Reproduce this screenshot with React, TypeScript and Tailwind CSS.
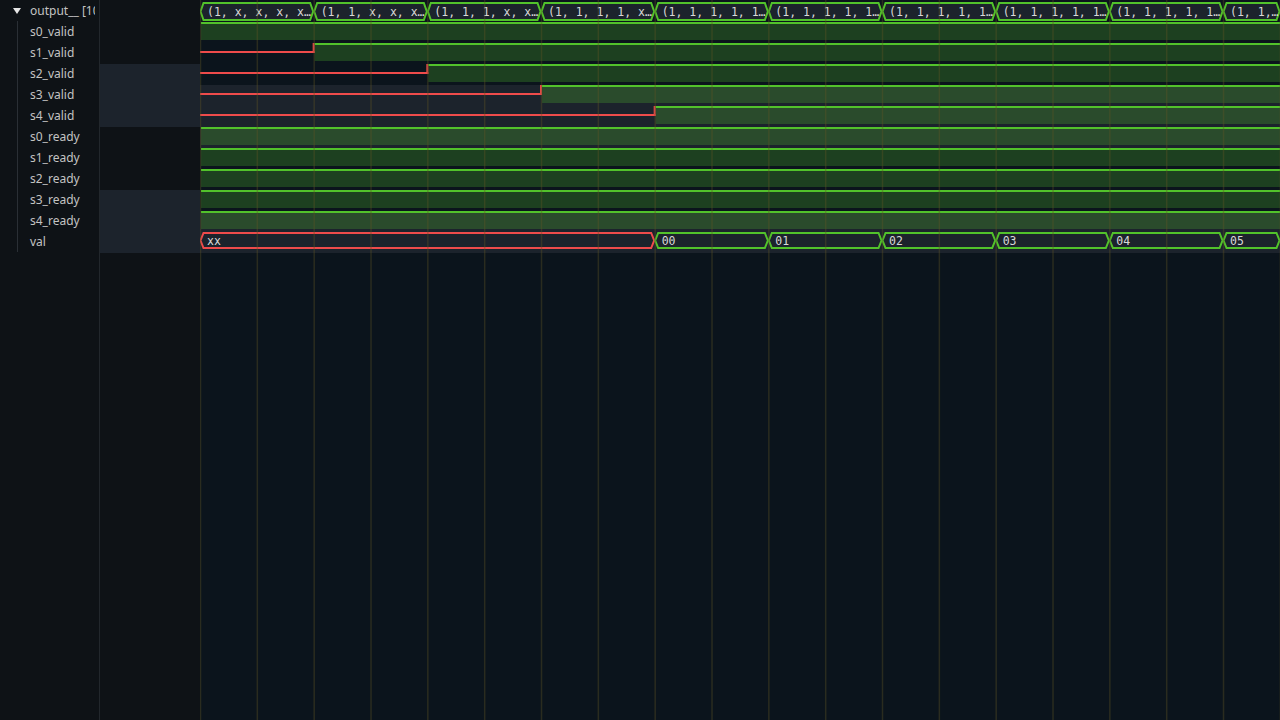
import React from "react";

const T = 113.67;
const W = 1080;
const GREEN = "#52c22b";
const RED = "#ef4b4b";
const BOXBG = "#1c232c";

const names = [
  "s0_valid",
  "s1_valid",
  "s2_valid",
  "s3_valid",
  "s4_valid",
  "s0_ready",
  "s1_ready",
  "s2_ready",
  "s3_ready",
  "s4_ready",
  "val",
];

const busTop = [
  "(1, x, x, x, x…",
  "(1, 1, x, x, x…",
  "(1, 1, 1, x, x…",
  "(1, 1, 1, 1, x…",
  "(1, 1, 1, 1, 1…",
  "(1, 1, 1, 1, 1…",
  "(1, 1, 1, 1, 1…",
  "(1, 1, 1, 1, 1…",
  "(1, 1, 1, 1, 1…",
  "(1, 1,…",
];

const rises = [0, 1, 2, 3, 4, 0, 0, 0, 0, 0];

function hexPoints(s: number, e: number, top: number, bot: number) {
  const mid = (top + bot) / 2;
  return [
    [s + 0.5, mid],
    [s + 3.5, top],
    [e - 3.5, top],
    [e - 0.5, mid],
    [e - 3.5, bot],
    [s + 3.5, bot],
  ]
    .map((p) => p.join(","))
    .join(" ");
}

function Bus({
  segs,
  top,
  bot,
}: {
  segs: { s: number; e: number; text: string; color: string }[];
  top: number;
  bot: number;
}) {
  const mid = (top + bot) / 2;
  return (
    <g>
      {segs.map((g, i) => (
        <g key={i}>
          <polygon
            points={hexPoints(g.s, g.e, top, bot)}
            fill={BOXBG}
            stroke={g.color}
            strokeWidth={2}
            strokeLinejoin="miter"
          />
          <text
            x={g.s + 7}
            y={mid + 4}
            fontSize={11.5}
            fill="#d8d8d8"
            fontFamily="'DejaVu Sans Mono', monospace"
          >
            {g.text}
          </text>
        </g>
      ))}
    </g>
  );
}

function Waves() {
  const grid = [];
  for (let k = 0; k <= 19; k++) grid.push(k * (T / 2));

  const topSegs = busTop.map((text, i) => ({
    s: i * T,
    e: Math.min((i + 1) * T, W),
    text,
    color: GREEN,
  }));

  const valSegs = [
    { s: 0, e: 4 * T, text: "xx", color: RED },
    ...["00", "01", "02", "03", "04", "05"].map((t, i) => ({
      s: (4 + i) * T,
      e: Math.min((5 + i) * T, W),
      text: t,
      color: GREEN,
    })),
  ];

  return (
    <svg width={W} height={720} className="block">
      <rect x={0} y={0} width={W} height={720} fill="#0b141c" />
      <rect x={0} y={85} width={W} height={63} fill={BOXBG} />
      <rect x={0} y={211} width={W} height={42} fill={BOXBG} />

      {rises.map((r, i) => {
        const top = 1 + 21 * (i + 1);
        const xr = r * T;
        return (
          <g key={i}>
            <rect
              x={xr + 1}
              y={top + 2}
              width={W - xr}
              height={16}
              fill={GREEN}
              fillOpacity={0.25}
            />
            {r > 0 && (
              <>
                <line x1={0} y1={top + 9} x2={xr + 1} y2={top + 9} stroke={RED} strokeWidth={2} />
                <line x1={xr} y1={top + 10} x2={xr} y2={top} stroke={RED} strokeWidth={2} />
              </>
            )}
            <line x1={xr + 1} y1={top + 1} x2={W} y2={top + 1} stroke={GREEN} strokeWidth={2} />
          </g>
        );
      })}

      <Bus segs={topSegs} top={3} bot={20} />
      <Bus segs={valSegs} top={233} bot={248} />

      {grid.map((x, i) => (
        <line
          key={i}
          x1={x + 0.5}
          y1={0}
          x2={x + 0.5}
          y2={720}
          stroke="#5e5426"
          strokeOpacity={0.38}
          strokeWidth={1.5}
        />
      ))}
    </svg>
  );
}

export default function App() {
  const hl = [3, 4, 5, 9, 10, 11];
  return (
    <div
      className="flex h-[720px] w-[1280px] overflow-hidden bg-[#0e1216] text-[#c3c3c3]"
      style={{ fontFamily: "'Noto Sans', 'Open Sans', sans-serif" }}
    >
      <div className="w-[99px] shrink-0 text-[12px]">
        <div className="flex h-[21px] w-[95px] items-center overflow-hidden pl-[13px]">
          <svg width={8} height={6} className="mr-[9px] shrink-0">
            <polygon points="0,0 8,0 4,6" fill="#e6e6e6" />
          </svg>
          <span className="whitespace-nowrap">output__ [10]</span>
        </div>
        <div className="ml-[17px] border-l border-[#2a2f35] pl-[12px]">
          {names.map((n) => (
            <div key={n} className="flex h-[21px] items-center whitespace-nowrap">
              {n}
            </div>
          ))}
        </div>
      </div>
      <div className="w-px shrink-0 bg-[#22272c]" />
      <div className="w-[100px] shrink-0 pt-[1px]">
        {Array.from({ length: 12 }).map((_, i) => (
          <div
            key={i}
            className={hl.includes(i) ? "h-[21px] bg-[#1c232c]" : "h-[21px]"}
          />
        ))}
      </div>
      <div className="flex-1">
        <Waves />
      </div>
    </div>
  );
}
